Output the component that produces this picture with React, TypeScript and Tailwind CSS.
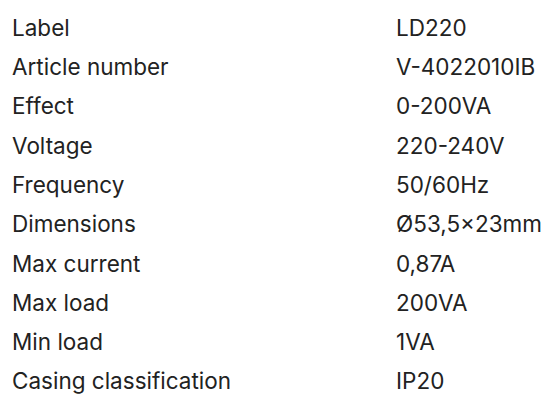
import React from 'react';

const specs: [string, string][] = [
  ['Label', 'LD220'],
  ['Article number', 'V-4022010IB'],
  ['Effect', '0-200VA'],
  ['Voltage', '220-240V'],
  ['Frequency', '50/60Hz'],
  ['Dimensions', 'Ø53,5×23mm'],
  ['Max current', '0,87A'],
  ['Max load', '200VA'],
  ['Min load', '1VA'],
  ['Casing classification', 'IP20'],
];

export default function App() {
  return (
    <div className="w-[550px] h-[412px] bg-white pt-[8px] font-['Inter',sans-serif] text-[22.5px] text-[#222222]">
      {specs.map(([label, value]) => (
        <div key={label} className="flex items-center h-[39.3px]">
          <div className="w-[396px] pl-[12px] whitespace-nowrap">{label}</div>
          <div className="whitespace-nowrap">{value}</div>
        </div>
      ))}
    </div>
  );
}
